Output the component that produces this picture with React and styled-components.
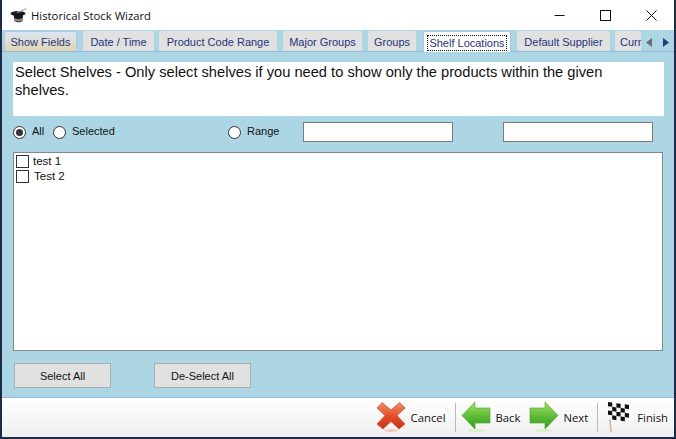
import React from "react";
import styled, { createGlobalStyle } from "styled-components";

const GlobalStyle = createGlobalStyle`
  html, body {
    margin: 0;
    padding: 0;
    background: #1e2b48;
  }
  * {
    box-sizing: border-box;
  }
`;

const Window = styled.div`
  width: 676px;
  height: 439px;
  display: flex;
  flex-direction: column;
  padding: 0 2px 2px;
  background: #1e2b48;
  font-family: "Liberation Sans", Arial, sans-serif;
  overflow: hidden;
`;

const TitleBar = styled.div`
  height: 30px;
  flex: none;
  display: flex;
  align-items: center;
  background: #fff;
  padding-left: 8px;
  color: #111;
  font-family: "Open Sans", sans-serif;
  font-size: 11.3px;
`;

const TitleText = styled.span`
  margin-left: 4px;
  flex: 1;
`;

const WinButton = styled.div`
  width: 46px;
  height: 30px;
  display: flex;
  align-items: center;
  justify-content: center;
`;

const TabStrip = styled.div`
  height: 22px;
  flex: none;
  display: flex;
  align-items: flex-start;
  background: #add6e4;
  border-bottom: 1px solid #98b8dc;
  padding: 1px 0 0 2px;
`;

const Tab = styled.div`
  width: ${({ $w }) => $w}px;
  margin-right: ${({ $gap }) => $gap}px;
  flex: none;
  height: ${({ $kind }) => ($kind === "selected" ? 21 : 20)}px;
  position: relative;
  display: flex;
  align-items: center;
  justify-content: center;
  padding-top: 1px;
  font-size: 11px;
  color: #27347c;
  white-space: nowrap;
  overflow: hidden;
  background: ${({ $kind }) =>
    $kind === "hover"
      ? "linear-gradient(#dbe6f4, #e2d6b0)"
      : $kind === "selected"
      ? "#fff"
      : "#e1e1e1"};
  border: ${({ $kind }) => ($kind ? "1px solid #a8c6ea" : "none")};
  border-bottom: none;
  border-radius: 2px 2px 0 0;
`;

const FocusLabel = styled.span`
  padding: 0 1px;
  outline: 1px dotted #111;
  line-height: 14px;
`;

const ClippedTab = styled(Tab)`
  justify-content: flex-start;
  padding-left: 5px;
`;

const TabArrows = styled.div`
  width: 33px;
  height: 20px;
  flex: none;
  display: flex;
  align-items: center;
  justify-content: center;
  gap: 11px;
  padding-top: 2px;
  background: #add6e4;
`;

const Body = styled.div`
  flex: 1;
  display: flex;
  flex-direction: column;
  background: #add6e4;
  padding: 10px 10px 0 11px;
  border-bottom: 1px solid #98b8dc;
`;

const Description = styled.div`
  height: 54px;
  width: 651px;
  background: #fff;
  padding: 1px 40px 1px 2px;
  color: #111;
  font-size: 14.67px;
  line-height: 18px;
`;

const FilterRow = styled.div`
  height: 20px;
  margin-top: 6px;
  display: flex;
  align-items: center;
  font-size: 11px;
  color: #111;
`;

const RadioItem = styled.label`
  width: ${({ $w }) => $w}px;
  flex: none;
  display: flex;
  align-items: center;
  gap: 6px;
`;

const RadioDot = styled.span`
  width: 13px;
  height: 13px;
  border-radius: 50%;
  border: 1px solid #333;
  background: #fff;
  display: flex;
  align-items: center;
  justify-content: center;
  &::after {
    content: "";
    width: 7px;
    height: 7px;
    border-radius: 50%;
    background: ${({ $on }) => ($on ? "#333" : "transparent")};
  }
`;

const RadioText = styled.span`
  padding-bottom: 2px;
`;

const TextBox = styled.div`
  width: 150px;
  height: 20px;
  background: #fff;
  border: 1px solid #7a7a7a;
  margin-right: ${({ $mr }) => $mr}px;
`;

const ListBox = styled.div`
  width: 650px;
  height: 199px;
  margin-top: 10px;
  background: #fff;
  border: 1px solid #828790;
  padding: 1px 2px;
  font-size: 11.5px;
  color: #111;
`;

const ListRow = styled.div`
  height: 15px;
  display: flex;
  align-items: center;
  gap: ${({ $gap }) => $gap}px;
`;

const ListText = styled.span`
  padding-bottom: 2px;
`;

const CheckBox = styled.span`
  width: 13px;
  height: 13px;
  border: 1px solid #333;
  background: #fff;
`;

const ButtonRow = styled.div`
  display: flex;
  margin-top: 12px;
  padding-left: 1px;
  gap: 43px;
`;

const PlainButton = styled.div`
  width: 97px;
  height: 25px;
  display: flex;
  align-items: center;
  justify-content: center;
  background: #e1e1e1;
  border: 1px solid #adadad;
  font-size: 11px;
  color: #111;
`;

const Footer = styled.div`
  height: 39px;
  flex: none;
  display: flex;
  align-items: center;
  justify-content: flex-end;
  background: linear-gradient(#fff, #efefef);
  font-family: "Open Sans", sans-serif;
  font-size: 11.3px;
  color: #111;
  padding: 0 6px 1px 0;
`;

const FooterButton = styled.div`
  display: flex;
  align-items: center;
  gap: ${({ $gap }) => $gap}px;
  margin-right: ${({ $mr }) => $mr || 0}px;
`;

const Divider = styled.div`
  width: 1px;
  height: 29px;
  background: #b9b9b9;
  margin: 0 ${({ $r }) => $r}px 0 9px;
`;

const HatIcon = () => (
  <svg width="17" height="15" viewBox="0 0 17 15">
    <ellipse cx="8" cy="5.5" rx="7.5" ry="2.6" fill="#1c1c1c" />
    <path d="M3.5 6 L13 6 L12.5 13 Q8.5 15.5 4.5 13 Z" fill="#161616" />
    <path d="M4.2 10 Q8.5 12.3 12.7 10 L12.5 12.4 Q8.5 14.6 4.4 12.4 Z" fill="#8a8a8a" />
    <path d="M7 4.5 L16.5 0.6" stroke="#b5b5b5" strokeWidth="1.3" />
  </svg>
);

const MinimizeIcon = () => (
  <svg width="11" height="11" viewBox="0 0 11 11">
    <path d="M0.5 5.5 H10.5" stroke="#111" strokeWidth="1" />
  </svg>
);

const MaximizeIcon = () => (
  <svg width="11" height="11" viewBox="0 0 11 11">
    <rect x="0.5" y="0.5" width="10" height="10" fill="none" stroke="#111" />
  </svg>
);

const CloseIcon = () => (
  <svg width="11" height="11" viewBox="0 0 11 11">
    <path d="M0.5 0.5 L10.5 10.5 M10.5 0.5 L0.5 10.5" stroke="#111" strokeWidth="1" />
  </svg>
);

const CancelIcon = () => (
  <svg width="30" height="32" viewBox="0 0 30 32">
    <defs>
      <linearGradient id="cancelFill" x1="0" y1="0" x2="0" y2="1">
        <stop offset="0" stopColor="#f0916c" />
        <stop offset="0.5" stopColor="#e2502a" />
        <stop offset="1" stopColor="#c8301a" />
      </linearGradient>
    </defs>
    <ellipse cx="15" cy="29.5" rx="7" ry="1.5" fill="#f3c9bb" />
    <path
      d="M6 1.5 L15 9 L23.5 1.5 L29 7 L21 14.5 L29 23 L23 28 L15 20.5 L7 28 L1 23 L9 14.5 L1 7 Z"
      fill="url(#cancelFill)"
      stroke="#c9563a"
      strokeWidth="0.8"
      strokeLinejoin="round"
    />
  </svg>
);

const ArrowIcon = ({ flip }) => (
  <svg width="30" height="32" viewBox="0 0 30 32" style={flip ? { transform: "scaleX(-1)" } : undefined}>
    <defs>
      <linearGradient id="arrowFill" x1="0" y1="0" x2="0" y2="1">
        <stop offset="0" stopColor="#a5e06a" />
        <stop offset="0.55" stopColor="#5cba35" />
        <stop offset="1" stopColor="#2f9a22" />
      </linearGradient>
    </defs>
    <ellipse cx="14" cy="29.5" rx="9" ry="1.3" fill="#d4efc2" />
    <path
      d="M1 7 L16 7 L16 1 L29 14.5 L16 28 L16 22 L1 22 Z"
      fill="url(#arrowFill)"
      stroke="#5aa83a"
      strokeWidth="0.7"
      strokeLinejoin="round"
    />
  </svg>
);

const checks = [
  [0, 0], [2, 0], [4, 0],
  [1, 1], [3, 1],
  [0, 2], [2, 2], [4, 2],
  [1, 3], [3, 3],
];

const FlagIcon = () => (
  <svg width="23" height="32" viewBox="0 0 23 32">
    <path d="M2.2 8 L4 31.5" stroke="#d9b497" strokeWidth="1.6" />
    <g transform="translate(1 1) skewY(8)">
      <rect width="21" height="17" fill="#f6f6f6" />
      {checks.map(([col, row]) => (
        <rect key={`${col}-${row}`} x={col * 4.2} y={row * 4.25} width="4.2" height="4.25" fill="#111" />
      ))}
    </g>
  </svg>
);

const tabs = [
  { label: "Date / Time", w: 71, gap: 5 },
  { label: "Product Code Range", w: 118, gap: 6 },
  { label: "Major Groups", w: 79, gap: 6 },
  { label: "Groups", w: 48, gap: 7 },
];

export default function App() {
  return (
    <Window>
      <GlobalStyle />
      <TitleBar>
        <HatIcon />
        <TitleText>Historical Stock Wizard</TitleText>
        <WinButton><MinimizeIcon /></WinButton>
        <WinButton><MaximizeIcon /></WinButton>
        <WinButton><CloseIcon /></WinButton>
      </TitleBar>
      <TabStrip>
        <Tab $w={73} $gap={6} $kind="hover">Show Fields</Tab>
        {tabs.map((tab) => (
          <Tab key={tab.label} $w={tab.w} $gap={tab.gap}>{tab.label}</Tab>
        ))}
        <Tab $w={88} $gap={6} $kind="selected"><FocusLabel>Shelf Locations</FocusLabel></Tab>
        <Tab $w={93} $gap={5}>Default Supplier</Tab>
        <ClippedTab $w={26} $gap={0}>Curr</ClippedTab>
        <TabArrows>
          <svg width="6" height="9" viewBox="0 0 6 9"><path d="M6 0 V9 L0 4.5 Z" fill="#6d6d6d" /></svg>
          <svg width="6" height="9" viewBox="0 0 6 9"><path d="M0 0 V9 L6 4.5 Z" fill="#1c3f7c" /></svg>
        </TabArrows>
      </TabStrip>
      <Body>
        <Description>
          Select Shelves - Only select shelves if you need to show only the products within the given shelves.
        </Description>
        <FilterRow>
          <RadioItem $w={40}><RadioDot $on /><RadioText>All</RadioText></RadioItem>
          <RadioItem $w={175}><RadioDot /><RadioText>Selected</RadioText></RadioItem>
          <RadioItem $w={75}><RadioDot /><RadioText>Range</RadioText></RadioItem>
          <TextBox $mr={50} />
          <TextBox />
        </FilterRow>
        <ListBox>
          <ListRow $gap={4}><CheckBox /><ListText>test 1</ListText></ListRow>
          <ListRow $gap={5}><CheckBox /><ListText>Test 2</ListText></ListRow>
        </ListBox>
        <ButtonRow>
          <PlainButton>Select All</PlainButton>
          <PlainButton>De-Select All</PlainButton>
        </ButtonRow>
      </Body>
      <Footer>
        <FooterButton $gap={5}><CancelIcon />Cancel</FooterButton>
        <Divider $r={5} />
        <FooterButton $gap={5} $mr={9}><ArrowIcon flip />Back</FooterButton>
        <FooterButton $gap={4}><ArrowIcon />Next</FooterButton>
        <Divider $r={9} />
        <FooterButton $gap={7}><FlagIcon />Finish</FooterButton>
      </Footer>
    </Window>
  );
}
